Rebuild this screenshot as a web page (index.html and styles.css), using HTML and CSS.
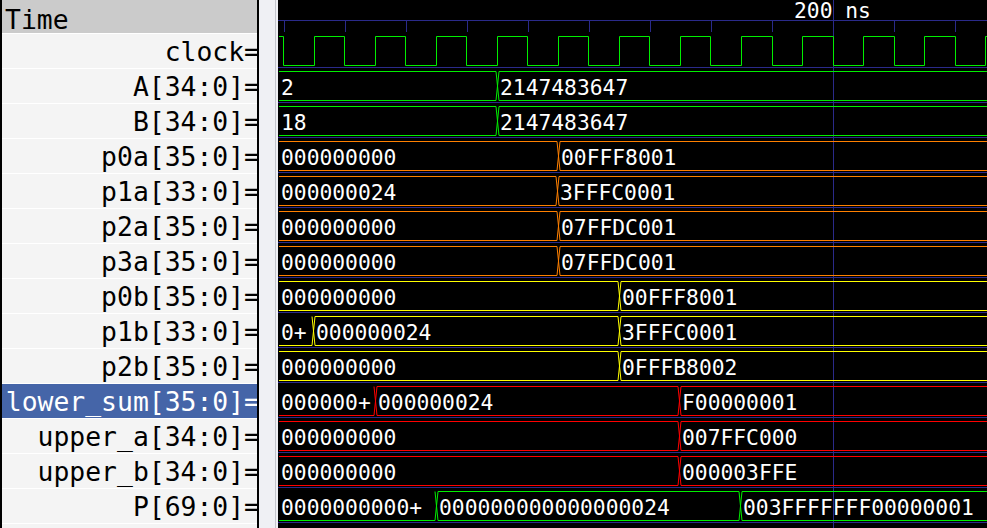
FILE: index.html
```html
<!DOCTYPE html>
<html>
<head>
<meta charset="utf-8">
<link rel="stylesheet" href="styles.css">
</head>
<body>
<div class="app">
  <div class="names">
    <div class="hdr">Time</div>
    <div class="row"><span>clock=</span></div>
    <div class="row"><span>A[34:0]=</span></div>
    <div class="row"><span>B[34:0]=</span></div>
    <div class="row"><span>p0a[35:0]=</span></div>
    <div class="row"><span>p1a[33:0]=</span></div>
    <div class="row"><span>p2a[35:0]=</span></div>
    <div class="row"><span>p3a[35:0]=</span></div>
    <div class="row"><span>p0b[35:0]=</span></div>
    <div class="row"><span>p1b[33:0]=</span></div>
    <div class="row"><span>p2b[35:0]=</span></div>
    <div class="row sel"><span>lower_sum[35:0]=</span></div>
    <div class="row"><span>upper_a[34:0]=</span></div>
    <div class="row"><span>upper_b[34:0]=</span></div>
    <div class="row"><span>P[69:0]=</span></div>
  </div>
  <div class="sash"><div class="sash-line"></div></div>
  <div class="wave">
    <svg width="709" height="528" viewBox="278 0 709 528">
      <g class="n">
        <path d="M278 20.5H987"/>
        <path d="M284.5 20V32M345.5 20V32M406.5 20V32M467.5 20V32M528.5 20V32M589.5 20V32M650.5 20V32M711.5 20V32M772.5 20V32M894.5 20V32M955.5 20V32"/>
        <path d="M833.5 0V528"/>
        <path d="M278 67.5H987M278 102.5H987M278 137.5H987M278 172.5H987M278 207.5H987M278 242.5H987M278 277.5H987M278 312.5H987M278 347.5H987M278 382.5H987M278 417.5H987M278 452.5H987M278 487.5H987M278 522.5H987"/>
      </g>
      <text class="tl" x="794" y="18">200 ns</text>

      <path class="g" d="M279 36.5H283.5V65.5H314.5V36.5H344.5V65.5H375.5V36.5H405.5V65.5H436.5V36.5H466.5V65.5H497.5V36.5H527.5V65.5H558.5V36.5H588.5V65.5H619.5V36.5H649.5V65.5H680.5V36.5H710.5V65.5H741.5V36.5H772.5V65.5H802.5V36.5H833.5V65.5H863.5V36.5H894.5V65.5H924.5V36.5H955.5V65.5H985.5V36.5H987"/>

      <path class="g" d="M279 71.5H496L499 100.5H987M279 100.5H496L499 71.5H987"/>
      <text x="281" y="95">2</text><text x="500" y="95">2147483647</text>

      <path class="g" d="M279 106.5H496L499 135.5H987M279 135.5H496L499 106.5H987"/>
      <text x="281" y="130">18</text><text x="500" y="130">2147483647</text>

      <path class="o" d="M279 141.5H557L560 170.5H987M279 170.5H557L560 141.5H987"/>
      <text x="281" y="165">000000000</text><text x="561" y="165">00FFF8001</text>

      <path class="o" d="M279 176.5H556L559 205.5H987M279 205.5H556L559 176.5H987"/>
      <text x="281" y="200">000000024</text><text x="560" y="200">3FFFC0001</text>

      <path class="o" d="M279 211.5H557L560 240.5H987M279 240.5H557L560 211.5H987"/>
      <text x="281" y="235">000000000</text><text x="561" y="235">07FFDC001</text>

      <path class="o" d="M279 246.5H557L560 275.5H987M279 275.5H557L560 246.5H987"/>
      <text x="281" y="270">000000000</text><text x="561" y="270">07FFDC001</text>

      <path class="y" d="M279 281.5H618L621 310.5H987M279 310.5H618L621 281.5H987"/>
      <text x="281" y="305">000000000</text><text x="622" y="305">00FFF8001</text>

      <path class="y" d="M279 345.5H312L315 316.5H618L621 345.5H987M312 316.5L315 345.5H618L621 316.5H987"/>
      <text x="281" y="340">0+</text><text x="316" y="340">000000024</text><text x="622" y="340">3FFFC0001</text>

      <path class="y" d="M279 351.5H618L621 380.5H987M279 380.5H618L621 351.5H987"/>
      <text x="281" y="375">000000000</text><text x="622" y="375">0FFFB8002</text>

      <path class="r" d="M279 415.5H374L377 386.5H678L681 415.5H987M374 386.5L377 415.5H678L681 386.5H987"/>
      <text x="281" y="410">000000+</text><text x="378" y="410">000000024</text><text x="682" y="410">F00000001</text>

      <path class="r" d="M279 421.5H678L681 450.5H987M279 450.5H678L681 421.5H987"/>
      <text x="281" y="445">000000000</text><text x="682" y="445">007FFC000</text>

      <path class="r" d="M279 456.5H678L681 485.5H987M279 485.5H678L681 456.5H987"/>
      <text x="281" y="480">000000000</text><text x="682" y="480">000003FFE</text>

      <path class="g" d="M279 520.5H435L438 491.5H739L742 520.5H987M435 491.5L438 520.5H739L742 491.5H987"/>
      <text x="281" y="515">0000000000+</text><text x="439" y="515">000000000000000024</text><text x="743" y="515">003FFFFFFF00000001</text>
    </svg>
  </div>
</div>
</body>
</html>
```
FILE: styles.css
```css
html, body {
  margin: 0;
  padding: 0;
  background: #000;
}
body {
  width: 987px;
  height: 528px;
  overflow: hidden;
}
.app {
  display: flex;
  height: 528px;
}
.names {
  flex: none;
  width: 259px;
  box-sizing: border-box;
  border-left: 2px solid #000;
  border-right: 2px solid #000;
  background: #f4f4f4;
  overflow: hidden;
  font-family: "DejaVu Sans Mono", monospace;
  font-size: 26.4px;
  color: #000;
}
.hdr {
  height: 34px;
  box-sizing: border-box;
  border-bottom: 1px solid #fff;
  background: #cbcbcb;
  padding: 5px 0 0 3px;
  line-height: 30px;
  overflow: hidden;
}
.row {
  height: 35px;
  box-sizing: border-box;
  border-bottom: 1px solid #fff;
  display: flex;
  justify-content: flex-end;
  padding-top: 1px;
  line-height: 34px;
  white-space: nowrap;
  overflow: hidden;
}
.row span {
  margin-right: -3px;
}
.sel {
  background: #4565a8;
  color: #fff;
}
.sash {
  flex: none;
  width: 19px;
  box-sizing: border-box;
  padding-right: 2px;
  background: #eff0f4;
  display: flex;
  justify-content: flex-end;
}
.sash-line {
  width: 1px;
  background: #c3c5cc;
}
.wave {
  flex: 1;
  background: #000;
  overflow: hidden;
}
.wave svg {
  display: block;
}
.wave path {
  fill: none;
  stroke-width: 1;
}
.wave text {
  font-family: "DejaVu Sans Mono", monospace;
  font-size: 21.3px;
  fill: #fff;
}
.n path { stroke: #2a2a8a; }
.g { stroke: #00ee00; }
.o { stroke: #ff8000; }
.y { stroke: #ffff00; }
.r { stroke: #ff0000; }
```
